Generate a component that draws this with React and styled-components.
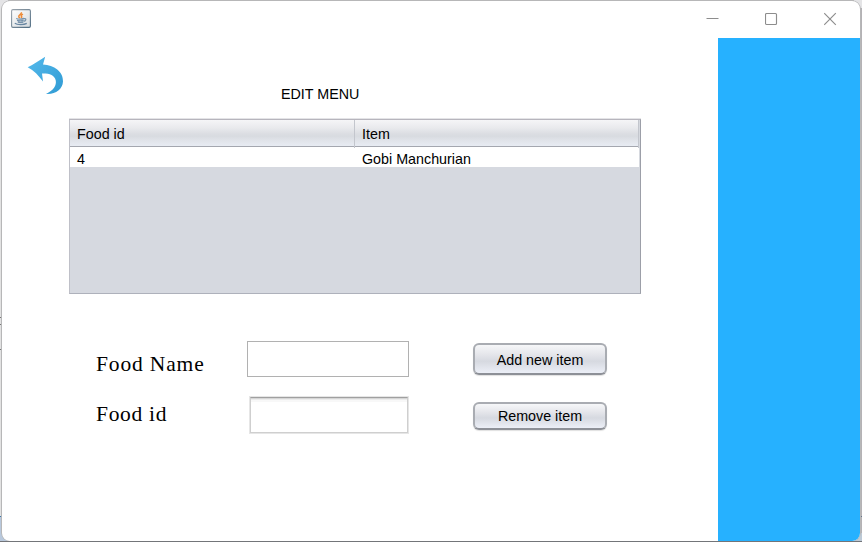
import React from "react";
import styled, { createGlobalStyle } from "styled-components";

const GlobalStyle = createGlobalStyle`
  * { box-sizing: border-box; }
  body { margin: 0; overflow: hidden; background: #c8c8ca; }
`;

const Desktop = styled.div`
  width: 862px;
  height: 542px;
  padding: 1px 2px 1px 2px;
  background:
    linear-gradient(#737579, #737579) 0 541px / 862px 1px no-repeat,
    linear-gradient(#8a8388, #8a8388) 105px 0 / 1px 1px no-repeat,
    linear-gradient(#b5abc4, #b5abc4) 128px 0 / 6px 1px no-repeat,
    linear-gradient(#777, #777) 0 317px / 2px 1px no-repeat,
    linear-gradient(#777, #777) 0 324px / 2px 1px no-repeat,
    linear-gradient(#777, #777) 0 349px / 2px 1px no-repeat,
    linear-gradient(#3c78a8, #3c78a8) 0 516px / 2px 1px no-repeat,
    linear-gradient(#637489, #637489) 860px 516px / 2px 1px no-repeat,
    linear-gradient(#b8c8dc, #b8c8dc) 0 517px / 10px 24px no-repeat,
    linear-gradient(#bcc9d6, #bcc9d6) 850px 533px / 12px 8px no-repeat,
    linear-gradient(#b4b2b5, #b4b2b5) 860px 8px / 2px 532px no-repeat,
    linear-gradient(90deg, #e2e2e2 0 1px, #b4b4b4 1px 2px) 0 10px / 2px 530px no-repeat,
    linear-gradient(#b9b9b9, #b9b9b9) 8px 0 / 846px 1px no-repeat,
    #e4e4e6;
`;

const Window = styled.div`
  width: 858px;
  height: 540px;
  border-radius: 8px;
  overflow: hidden;
  background: #fff;
  box-shadow: 0 0 0 1px #b7b7b8;
  display: flex;
  flex-direction: column;
  clip-path: inset(-1px -1px 0 -1px round 9px 9px 8px 8px);
  font-family: "Liberation Sans", Arial, sans-serif;
  font-size: 14.3px;
  color: #000;
`;

const TitleBar = styled.header`
  height: 37px;
  flex: none;
  display: flex;
  justify-content: space-between;
  padding: 8px 23px 0 9px;
`;

const AppIcon = styled.svg`
  width: 20px;
  height: 19px;
`;

const Controls = styled.div`
  display: flex;
  height: 20px;
  gap: 46px;
  svg { width: 13px; height: 20px; fill: none; stroke: #8d8d8d; stroke-width: 1.15; }
`;

const Body = styled.div`
  flex: 1;
  display: flex;
`;

const Panel = styled.main`
  width: 716px;
  padding: 18px 0 0 25px;
`;

const Sidebar = styled.aside`
  flex: 1;
  background: #26b1ff;
`;

const BackButton = styled.button`
  display: block;
  width: 38px;
  height: 40px;
  padding: 0;
  border: 0;
  background: none;
  svg { display: block; }
`;

const Title = styled.h1`
  margin: -11px 0 0 254px;
  height: 34px;
  font-size: 14.3px;
  font-weight: 400;
  line-height: 18px;
`;

const Table = styled.div`
  width: 572px;
  height: 175px;
  margin-left: 42px;
  background: #d6d9e0;
  border: 1px solid #aeb1bb;
  border-top-color: #b7b5bd;
  border-left-color: #bfc0c8;
  border-right-color: #9c9fa8;
  box-shadow: 0 -1px 0 #e4e4e7, inset -1px 0 #d6d9df;
`;

const Row = styled.div`
  display: grid;
  grid-template-columns: 285px ${(p) => (p.$head ? 284 : 284)}px;
  height: ${(p) => (p.$head ? 27 : 20)}px;
  width: 569px;
  line-height: ${(p) => (p.$head ? 28 : 24)}px;
  background: ${(p) =>
    p.$head
      ? "linear-gradient(#f5f5f7 0%, #e9eaed 30%, #dcdee3 52%, #d8dbe0 62%, #e0e3e9 78%, #e8ecf3 100%)"
      : "#fff"};
  border-bottom: ${(p) => (p.$head ? "1px solid #a4a7af" : "0")};
`;

const Cell = styled.div`
  padding-left: 7px;
  border-right: ${(p) => (p.$head ? "1px solid #c3c6cd" : "0")};
`;

const Form = styled.div`
  display: grid;
  grid-template-columns: 151px 226px 136px;
  grid-template-rows: 37px 38px;
  row-gap: 18px;
  margin: 47px 0 0 69px;
`;

const Label = styled.label`
  font-family: "Liberation Serif", "Times New Roman", serif;
  font-size: 21.5px;
  line-height: 26px;
  letter-spacing: ${(p) => p.$track}px;
  padding-top: ${(p) => p.$top}px;
  white-space: nowrap;
`;

const Input = styled.input`
  display: block;
  padding: 0 8px;
  outline: 0;
  font: inherit;
  border-radius: 0;
  background: #fff;
  width: 162px;
  height: 36px;
  border: 1px solid #b1b1b1;
`;

const InsetInput = styled(Input)`
  width: 158px;
  height: 36px;
  margin: 1px 0 0 3px;
  border: 1px solid #cfcfcf;
  border-top-color: #a0a0a0;
  box-shadow: 0 0 0 1px #e6e6e6, 0 -1px 0 #c4c4c4, inset 0 1px #d6d6d6,
    inset 0 2px #ececec, inset 0 4px #f8f8f8;
`;

const ActionButton = styled.button`
  width: 134px;
  height: ${(p) => p.$height}px;
  margin: ${(p) => p.$top}px 0 0;
  padding: ${(p) => p.$nudge}px 0 0;
  font: inherit;
  color: #000;
  border: 2px solid #a9acb2;
  border-bottom-color: #8d9097;
  border-radius: 6px;
  background: linear-gradient(#f6f7f9 0%, #e4e5ea 35%, #d6d9e0 58%, #eceff7 100%);
  box-shadow: 0 1px 1px #e0e0e0;
`;

const JavaIcon = () => (
  <AppIcon viewBox="0 0 20 19">
    <defs>
      <linearGradient id="tile" x1="0" y1="0" x2="1" y2="1">
        <stop offset="0" stopColor="#fff" />
        <stop offset="1" stopColor="#d5dadd" />
      </linearGradient>
      <linearGradient id="rim" x1="0" y1="0" x2="1" y2="1">
        <stop offset="0" stopColor="#9aa3ab" />
        <stop offset="1" stopColor="#4f6c82" />
      </linearGradient>
    </defs>
    <rect x=".6" y=".6" width="18.8" height="17.8" rx="1.3" fill="url(#tile)" stroke="url(#rim)" strokeWidth="1.1" />
    <path d="M10.4 3.2c.8 2-3.6 2.7-2.6 4.6.3.6.9.9 1.1 1.2M12 5.2c-1.8 1-2.2 1.6-1.4 2.4.5.6 0 1-.4 1.4" fill="none" stroke="#ee8b37" strokeWidth="1.5" />
    <path d="M5.2 9.5c2 .7 5.4.6 7.8 0M6 11.4c2 .6 4.8.6 6.6 0M6.8 13.1c1.6.5 3.9.5 5.5 0M13 9.7c2.6-.6 2.3 2.1-.3 2.6" fill="none" stroke="#7893ab" strokeWidth="1.3" />
    <path d="M3.8 14.3c2.6 1.8 9.2 1.6 12 .1" fill="none" stroke="#6886a1" strokeWidth="1.3" />
  </AppIcon>
);

const BackIcon = () => (
  <svg width="38" height="40" viewBox="0 0 38 40">
    <defs>
      <linearGradient id="arrow" x1="0" y1="0" x2="1" y2="1">
        <stop offset="0" stopColor="#54b9eb" />
        <stop offset="1" stopColor="#309bd4" />
      </linearGradient>
    </defs>
    <path
      d="M.7 11.3C6.5 8.5 12.5 4.5 18.2.8L16 8.4C27 9 36.5 15.5 36 25.5 35.6 33.5 28 38.8 19 37.9 26.5 34.5 29.8 29.5 28.7 24.3 27.5 18.8 22.5 17.2 15 17.4L16 25.6C11.5 19.5 7 14.5.7 11.3Z"
      fill="url(#arrow)"
    />
  </svg>
);

export default function App() {
  return (
    <>
      <GlobalStyle />
      <Desktop>
        <Window>
          <TitleBar>
            <JavaIcon />
            <Controls>
              <svg viewBox="0 0 13 20"><path d="M.5 9.5h12" /></svg>
              <svg viewBox="0 0 13 20"><rect x=".5" y="4.5" width="11" height="11" rx="1" /></svg>
              <svg viewBox="0 0 13 20"><path d="M.2 4.2l11.6 11.6M11.8 4.2L.2 15.8" /></svg>
            </Controls>
          </TitleBar>
          <Body>
            <Panel>
              <BackButton aria-label="Back"><BackIcon /></BackButton>
              <Title>EDIT MENU</Title>
              <Table>
                <Row $head><Cell $head>Food id</Cell><Cell $head>Item</Cell></Row>
                <Row><Cell>4</Cell><Cell>Gobi Manchurian</Cell></Row>
              </Table>
              <Form>
                <Label htmlFor="food-name" $top={10} $track={0.85}>Food Name</Label>
                <Input id="food-name" />
                <ActionButton $height={32} $top={2} $nudge={1}>Add new item</ActionButton>
                <Label htmlFor="food-id" $top={5} $track={0.7}>Food id</Label>
                <InsetInput id="food-id" />
                <ActionButton $height={28} $top={6} $nudge={0}>Remove item</ActionButton>
              </Form>
            </Panel>
            <Sidebar />
          </Body>
        </Window>
      </Desktop>
    </>
  );
}
